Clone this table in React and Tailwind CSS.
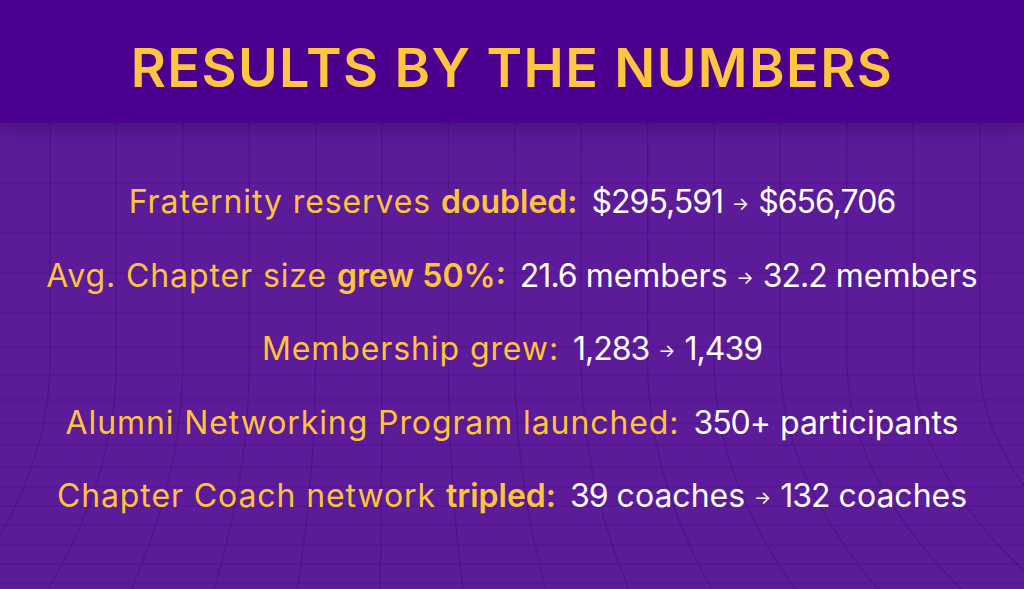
import React from 'react';

const stats = [
    { label: 'Fraternity reserves ', bold: 'doubled:', from: '$295,591', to: '$656,706' },
    { label: 'Avg. Chapter size ', bold: 'grew 50%:', from: '21.6 members', to: '32.2 members' },
    { label: 'Membership grew:', bold: '', from: '1,283', to: '1,439' },
    { label: 'Alumni Networking Program launched:', bold: '', from: '350+ participants', to: null },
    { label: 'Chapter Coach network ', bold: 'tripled:', from: '39 coaches', to: '132 coaches' },
];

// horizontal grid lines, measured from the top of the body panel
const rows = [60, 110, 150, 190, 224, 252, 277, 300, 322, 344, 364, 383, 402, 422, 441, 460];

const column = (x0) => {
    const pts = [];
    for (let y = 0; y <= 470; y += 10) {
        const abs = y + 123;
        let x = x0;
        if (abs > 360) {
            const t = (abs - 360) / 229;
            x = x0 + (x0 - 390) * 0.25 * t * t;
        }
        pts.push(`${x.toFixed(1)},${y}`);
    }
    return pts.join(' ');
};

const GridLines = () => (
    <svg className="absolute inset-0 h-full w-full" viewBox="0 0 1024 466" preserveAspectRatio="none">
        {rows.map((y) => (
            <line key={y} x1="0" x2="1024" y1={y} y2={y} stroke="#4f138c" strokeWidth="1" opacity="0.7" />
        ))}
        {Array.from({ length: 15 }, (_, k) => 50 + 66.4 * k).map((x) => (
            <polyline key={x} points={column(x)} fill="none" stroke="#4a1086" strokeWidth="1.1" opacity="0.8" />
        ))}
    </svg>
);

// digits sit a little tighter than the words around them
const Value = ({ text }) => (
    <span>
        {text.split(/([\d$,.%]+)/).map((part, i) =>
            /\d/.test(part) ? (
                <span key={i} className="tracking-[-1px]">{part}</span>
            ) : (
                <span key={i}>{part}</span>
            )
        )}
    </span>
);

const App = () => {
    return (
        <div className="flex h-[589px] w-[1024px] flex-col overflow-hidden bg-[#5c1b99] font-['Inter',sans-serif]">
            <div className="relative z-10 h-[123px] shrink-0 bg-[#4b0090] pt-[41px] text-center shadow-[0_5px_14px_rgba(45,5,80,0.45)]">
                <h1 className="text-[54px] font-semibold leading-none tracking-[1.4px] text-[#fdc540]">
                    RESULTS BY THE NUMBERS
                </h1>
            </div>
            <div className="relative flex-1">
                <GridLines />
                <div className="relative flex flex-col items-center gap-[41.5px] pt-[63px]">
                    {stats.map((s) => (
                        <p key={s.label} className="whitespace-pre text-[32px] leading-none text-white">
                            <span className="tracking-[0.9px] text-[#fcc43d]">{s.label}</span>
                            {s.bold && <span className="font-semibold text-[#fcc43d]">{s.bold}</span>}
                            <span className="ml-[14px]">
                                <Value text={s.from} />
                            </span>
                            {s.to && (
                                <>
                                    <span className="mx-[9px] inline-block align-[3px] text-[18px]">→</span>
                                    <Value text={s.to} />
                                </>
                            )}
                        </p>
                    ))}
                </div>
            </div>
        </div>
    );
};

export default App;
